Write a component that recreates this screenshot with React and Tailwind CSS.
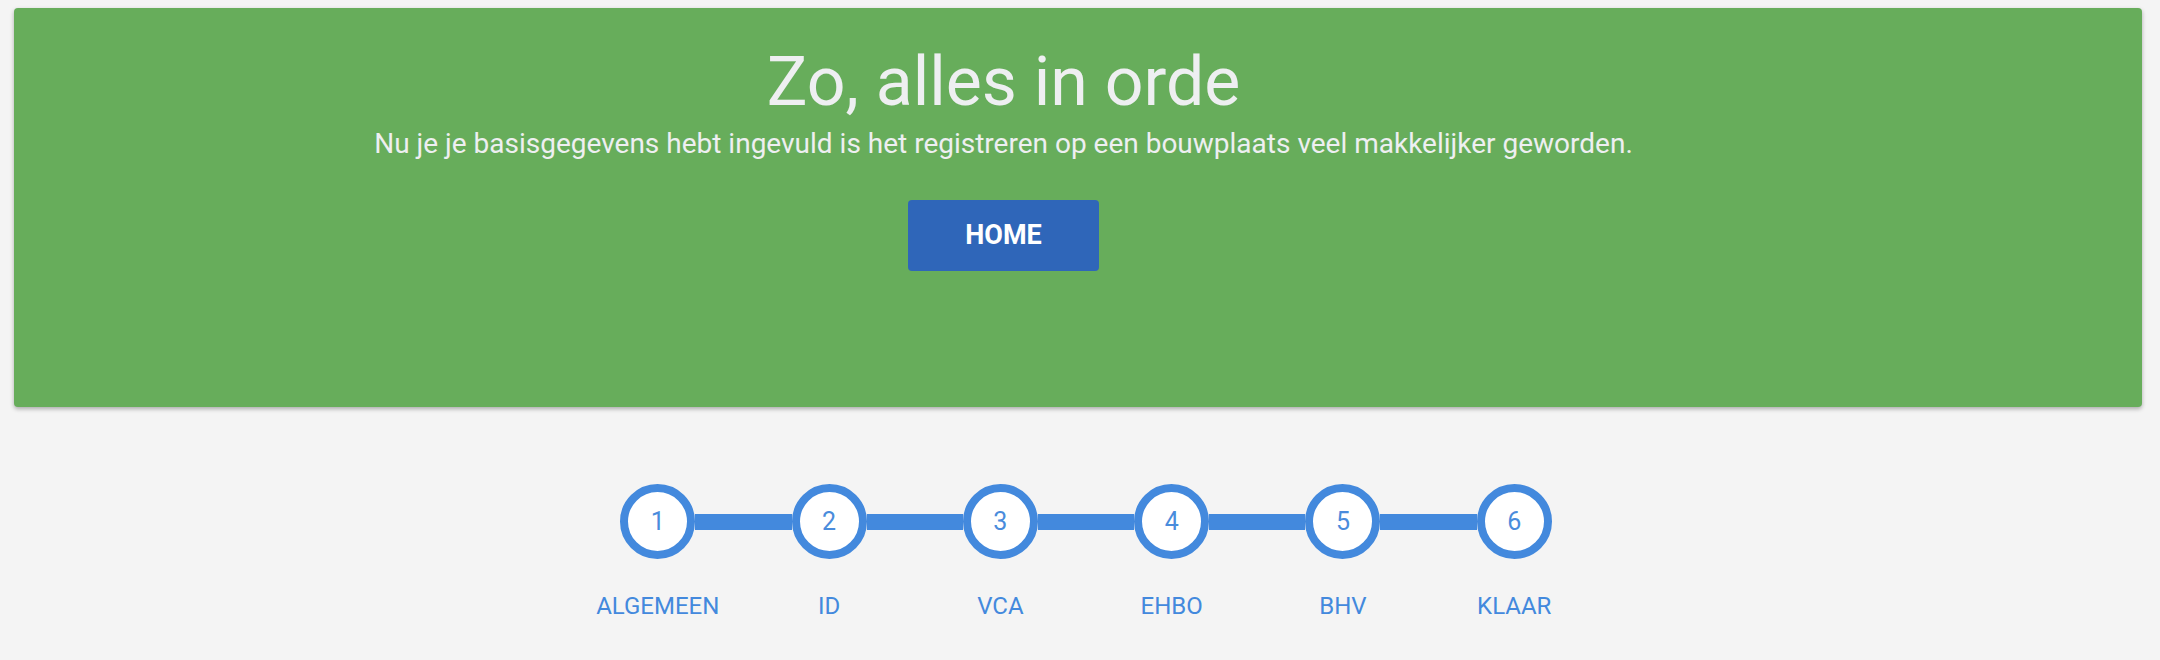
import React from "react";

const steps = [
  { nr: 1, label: "ALGEMEEN" },
  { nr: 2, label: "ID" },
  { nr: 3, label: "VCA" },
  { nr: 4, label: "EHBO" },
  { nr: 5, label: "BHV" },
  { nr: 6, label: "KLAAR" },
];

const Step = ({ nr, label, first, last }) => {
  return (
    <div className="w-[171.3px] flex flex-col items-center">
      {/* circle with connecting bars */}
      <div className="w-full flex items-center">
        <div className={`flex-1 h-[16px] ${first ? "" : "bg-[#4389dd]"}`} />
        <div className="w-[75px] h-[75px] shrink-0 rounded-full border-[8px] border-[#4389dd] bg-white flex items-center justify-center">
          <span className="text-[25px] leading-none text-[#4a8cdc]">{nr}</span>
        </div>
        <div className={`flex-1 h-[16px] ${last ? "" : "bg-[#4389dd]"}`} />
      </div>
      <div className="mt-[35px] text-[24px] leading-none text-[#4389dd] whitespace-nowrap">
        {label}
      </div>
    </div>
  );
};

export default function App() {
  return (
    <div
      className="min-h-[660px] bg-[#f4f4f4] pt-[8px] pl-[14px] pr-[18px]"
      style={{ fontFamily: "Roboto, 'Noto Sans', Arial, sans-serif" }}
    >
      {/* Green banner */}
      <div className="h-[399px] bg-[#67ad5b] rounded-[4px] shadow-[0_2px_4px_rgba(0,0,0,0.3)] pt-[40px] pr-[149px] flex flex-col items-center">
        <h1 className="text-[68px] leading-none font-normal text-[#eeeff1]">
          Zo, alles in orde
        </h1>
        <p className="mt-[14px] text-[28px] leading-none text-[#eeeff1] whitespace-nowrap">
          Nu je je basisgegevens hebt ingevuld is het registreren op een bouwplaats veel makkelijker geworden.
        </p>
        <button className="mt-[42px] w-[191px] h-[71px] rounded-[4px] bg-[#2f66b9] text-white text-[27px] font-bold">
          HOME
        </button>
      </div>

      {/* Stepper */}
      <div className="mt-[77px] flex justify-center pl-[16px]">
        {steps.map((s, i) => (
          <Step
            key={s.nr}
            nr={s.nr}
            label={s.label}
            first={i === 0}
            last={i === steps.length - 1}
          />
        ))}
      </div>
    </div>
  );
}
